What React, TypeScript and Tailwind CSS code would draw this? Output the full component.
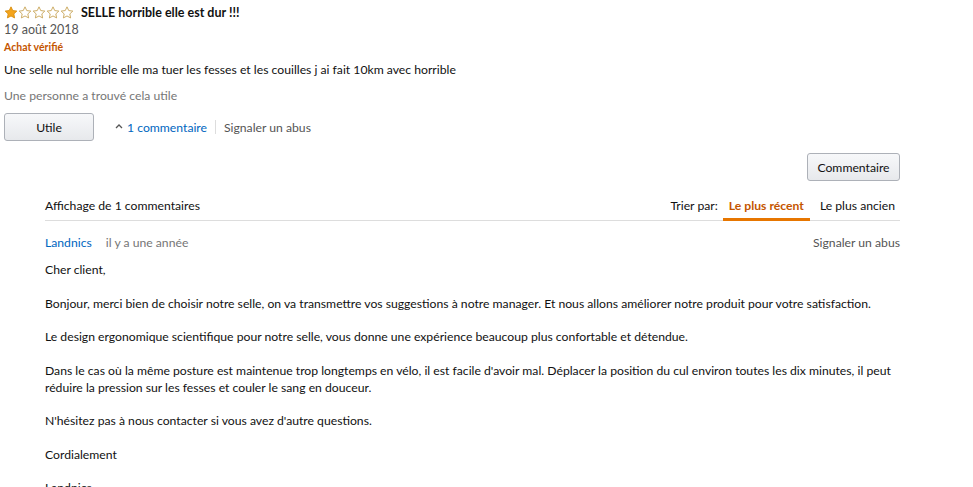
import React from "react";

const font = { fontFamily: 'Lato, "Noto Sans", Arial, sans-serif' };

function Star({ filled }: { filled: boolean }) {
  return (
    <svg width="14" height="13" viewBox="0 0 24 23">
      <path
        d="M12 1.5l3.1 6.6 7.2.9-5.3 5 1.4 7.1L12 17.6l-6.4 3.5 1.4-7.1-5.3-5 7.2-.9z"
        fill={filled ? "#f4a41c" : "#fff"}
        stroke={filled ? "#d88e0e" : "#c8a456"}
        strokeWidth="1.6"
        strokeLinejoin="round"
      />
    </svg>
  );
}

const paragraphs = [
  "Cher client,",
  "Bonjour, merci bien de choisir notre selle, on va transmettre vos suggestions à notre manager. Et nous allons améliorer notre produit pour votre satisfaction.",
  "Le design ergonomique scientifique pour notre selle, vous donne une expérience beaucoup plus confortable et détendue.",
  "Dans le cas où la même posture est maintenue trop longtemps en vélo, il est facile d'avoir mal. Déplacer la position du cul environ toutes les dix minutes, il peut réduire la pression sur les fesses et couler le sang en douceur.",
  "N'hésitez pas à nous contacter si vous avez d'autre questions.",
  "Cordialement",
  "Landnics",
];

export default function App() {
  return (
    <div className="w-[973px] h-[487px] overflow-hidden bg-white text-[12.2px] leading-[17px] text-[#111]" style={font}>
      <div className="pl-1 pt-[4px]">
        <div className="flex items-center gap-[7px]">
          <div className="flex">
            <Star filled />
            <Star filled={false} />
            <Star filled={false} />
            <Star filled={false} />
            <Star filled={false} />
          </div>
          <span className="font-bold text-[12.5px]">SELLE horrible elle est dur !!!</span>
        </div>
        <div className="text-[#555] text-[12.5px]">19 août 2018</div>
        <div className="text-[10.5px] leading-[15px] font-bold text-[#c45500] mt-[2px]">Achat vérifié</div>
        <div className="mt-[6px]">
          Une selle nul horrible elle ma tuer les fesses et les couilles j ai fait 10km avec horrible
        </div>
        <div className="text-[#767676] mt-[9px]">Une personne a trouvé cela utile</div>
        <div className="flex items-center mt-[9px]">
          <button className="w-[90px] h-[28px] rounded-[3px] border border-[#adb1b8] bg-gradient-to-b from-[#f7f8fa] to-[#e7e9ec] text-[#111]">
            Utile
          </button>
          <span className="ml-[21px] flex items-center text-[#0066c0]">
            <svg width="8" height="6" viewBox="0 0 8 6" className="mr-[4px] mb-[2px]">
              <path d="M1 5l3-3 3 3" fill="none" stroke="#555" strokeWidth="1.3" />
            </svg>
            1 commentaire
          </span>
          <span className="mx-[8px] h-[14px] w-px bg-[#ddd]" />
          <span className="text-[#555]">Signaler un abus</span>
        </div>
      </div>

      <div className="w-[900px] flex justify-end mt-[12px]">
        <button className="w-[93px] h-[28px] rounded-[3px] border border-[#adb1b8] bg-gradient-to-b from-[#f7f8fa] to-[#e7e9ec] text-[#111]">
          Commentaire
        </button>
      </div>

      <div className="ml-[45px] w-[855px] mt-[16px]">
        <div className="flex items-end justify-between border-b border-[#ddd]">
          <div className="pb-[6px]">Affichage de 1 commentaires</div>
          <div className="flex items-end">
            <span className="pb-[6px] mr-[5px] text-[#111]">Trier par:</span>
            <span className="px-[6px] pb-[4px] border-b-[3px] border-[#e77600] text-[#c45500] font-bold -mb-px">
              Le plus récent
            </span>
            <span className="px-[10px] pb-[6px] pr-[5px]">Le plus ancien</span>
          </div>
        </div>
        <div className="flex justify-between mt-[13px]">
          <div>
            <span className="text-[#0066c0]">Landnics</span>
            <span className="text-[#767676] ml-[14px]">il y a une année</span>
          </div>
          <span className="text-[#555]">Signaler un abus</span>
        </div>
        <div className="mt-[10px] flex flex-col gap-[16.5px]">
          {paragraphs.map((p, i) => (
            <p key={i}>{p}</p>
          ))}
        </div>
      </div>
    </div>
  );
}
